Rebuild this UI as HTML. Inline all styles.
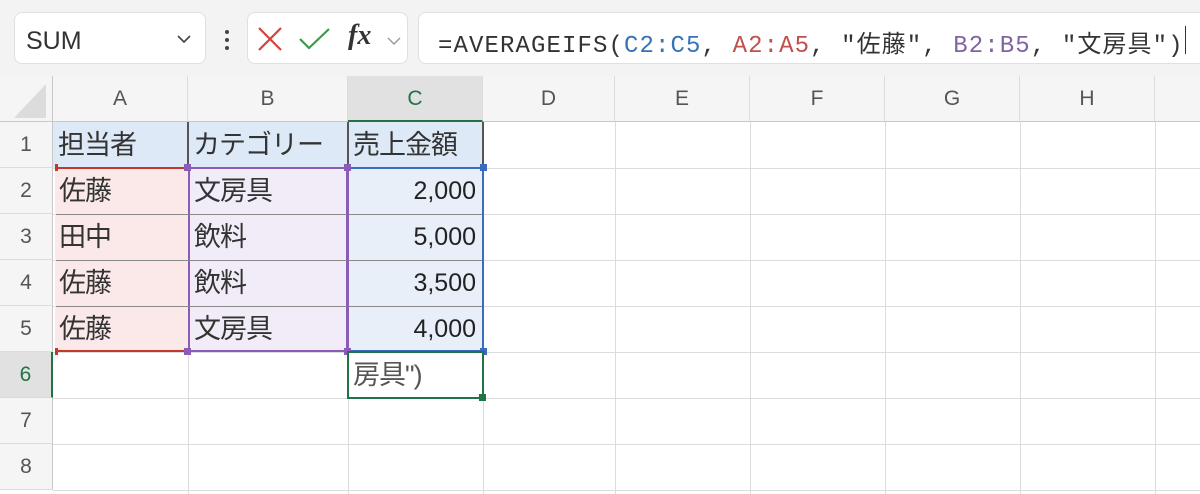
<!DOCTYPE html><html><head><meta charset="utf-8"><style>
*{margin:0;padding:0;box-sizing:border-box}
body{width:1200px;height:494px;overflow:hidden;background:#fff;font-family:"Liberation Sans","Noto Sans CJK JP",sans-serif;position:relative}
.a{position:absolute}
.tb{left:0;top:0;width:1200px;height:76px;background:#f3f3f3}
.box{background:#fff;border:1px solid #e0e0e0;border-radius:8px}
.ch{top:76px;height:46px;font-size:21px;color:#555;text-align:center;line-height:46px;border-right:1px solid #dcdcdc;background:#f5f5f5;border-bottom:1px solid #c8c8c8}
.rh{left:0;width:53px;height:46px;font-size:21px;color:#555;text-align:center;line-height:46px;background:#f5f5f5;border-bottom:1px solid #dcdcdc;border-right:1px solid #c8c8c8}
.vl{top:122px;width:1px;height:372px;background:#dcdcdc}
.hl{left:53px;width:1147px;height:1px;background:#dcdcdc}
.c{font-size:27px;color:#333;line-height:46px;padding-left:5px;white-space:nowrap;letter-spacing:-1px}
.n{font-size:25px;color:#222;line-height:46px;text-align:right;padding-right:7px}
.hd{width:7px;height:7px}
</style></head><body>
<div class="a tb"></div>
<div class="a box" style="left:14px;top:12px;width:192px;height:52px"></div>
<div class="a" style="left:26px;top:27px;font-size:25px;color:#333">SUM</div>
<svg class="a" style="left:176px;top:34px" width="16" height="10"><path d="M2 2 L8 8 L14 2" fill="none" stroke="#444" stroke-width="1.6"/></svg>
<div class="a" style="left:225px;top:30px;width:4px;height:4px;background:#444;border-radius:2px"></div>
<div class="a" style="left:225px;top:38px;width:4px;height:4px;background:#444;border-radius:2px"></div>
<div class="a" style="left:225px;top:46px;width:4px;height:4px;background:#444;border-radius:2px"></div>
<div class="a box" style="left:247px;top:12px;width:161px;height:52px"></div>
<svg class="a" style="left:256px;top:26px" width="28" height="26"><path d="M3 2 L25 24 M25 2 L3 24" stroke="#d9403a" stroke-width="2.2"/></svg>
<svg class="a" style="left:298px;top:26px" width="34" height="26"><path d="M2 13 L11 22 L31 3" fill="none" stroke="#3a9a4a" stroke-width="2.2"/></svg>
<div class="a" style="left:348px;top:20px;font-family:'Liberation Serif',serif;font-style:italic;font-weight:bold;font-size:28px;color:#333">fx</div>
<svg class="a" style="left:386px;top:36px" width="16" height="10"><path d="M2 2 L8 8 L14 2" fill="none" stroke="#999" stroke-width="1.4"/></svg>
<div class="a box" style="left:418px;top:12px;width:800px;height:52px"></div>
<div class="a" style="left:438px;top:24px;font-family:'Liberation Mono','Noto Sans CJK JP',monospace;font-size:24px;color:#333;white-space:nowrap;letter-spacing:1.1px">=AVERAGEIFS(<span style="color:#3572b8">C2:C5</span>, <span style="color:#c0504d">A2:A5</span>, "佐藤", <span style="color:#8064a2">B2:B5</span>, "文房具")</div>
<div class="a" style="left:1185px;top:26px;width:1px;height:28px;background:#333"></div>
<div class="a" style="left:0;top:76px;width:53px;height:46px;background:#f5f5f5;border-right:1px solid #c8c8c8;border-bottom:1px solid #c8c8c8"></div>
<svg class="a" style="left:14px;top:84px" width="32" height="34"><path d="M32 0 L32 34 L0 34 Z" fill="#dcdcdc"/></svg>
<div class="a ch" style="left:53px;width:135px">A</div>
<div class="a ch" style="left:188px;width:160px">B</div>
<div class="a ch" style="left:348px;width:135px;background:#e1e1e1;color:#217346;border-bottom:2px solid #217346">C</div>
<div class="a ch" style="left:483px;width:132px">D</div>
<div class="a ch" style="left:615px;width:135px">E</div>
<div class="a ch" style="left:750px;width:135px">F</div>
<div class="a ch" style="left:885px;width:135px">G</div>
<div class="a ch" style="left:1020px;width:135px">H</div>
<div class="a ch" style="left:1155px;width:45px;border-right:none"></div>
<div class="a rh" style="top:122px">1</div>
<div class="a rh" style="top:168px">2</div>
<div class="a rh" style="top:214px">3</div>
<div class="a rh" style="top:260px">4</div>
<div class="a rh" style="top:306px">5</div>
<div class="a rh" style="top:352px;background:#e1e1e1;color:#217346;border-right:2px solid #217346">6</div>
<div class="a rh" style="top:398px">7</div>
<div class="a rh" style="top:444px">8</div>
<div class="a vl" style="left:188px"></div><div class="a vl" style="left:348px"></div><div class="a vl" style="left:483px"></div><div class="a vl" style="left:615px"></div><div class="a vl" style="left:750px"></div><div class="a vl" style="left:885px"></div><div class="a vl" style="left:1020px"></div><div class="a vl" style="left:1155px"></div>
<div class="a hl" style="top:168px"></div><div class="a hl" style="top:214px"></div><div class="a hl" style="top:260px"></div><div class="a hl" style="top:306px"></div><div class="a hl" style="top:352px"></div><div class="a hl" style="top:398px"></div><div class="a hl" style="top:444px"></div><div class="a hl" style="top:490px"></div>
<div class="a" style="left:53px;top:122px;width:430px;height:46px;background:#dde9f6"></div>
<div class="a" style="left:187px;top:122px;width:2px;height:46px;background:#555"></div>
<div class="a" style="left:347px;top:122px;width:2px;height:46px;background:#555"></div>
<div class="a" style="left:482px;top:122px;width:2px;height:46px;background:#555"></div>
<div class="a c" style="left:53px;top:122px">担当者</div>
<div class="a c" style="left:188px;top:122px">カテゴリー</div>
<div class="a c" style="left:348px;top:122px">売上金額</div>
<div class="a" style="left:55px;top:167px;width:133px;height:185px;background:#fbe9e9;border-top:2px solid #c0392b;border-bottom:2px solid #c0392b"></div>
<div class="a" style="left:188px;top:167px;width:160px;height:185px;background:#f1ecf7;border:2px solid #8a5cb8"></div>
<div class="a" style="left:348px;top:167px;width:136px;height:185px;background:#e9eff8;border:2px solid #3a6dbf;border-left:none"></div>
<div class="a" style="left:56px;top:214px;width:426px;height:1px;background:#888"></div>
<div class="a" style="left:56px;top:260px;width:426px;height:1px;background:#888"></div>
<div class="a" style="left:56px;top:306px;width:426px;height:1px;background:#888"></div>
<div class="a" style="left:347px;top:168px;width:2px;height:184px;background:#8a5cb8"></div>
<div class="a hd" style="left:184px;top:164px;background:#8a5cb8"></div>
<div class="a hd" style="left:344px;top:164px;background:#8a5cb8"></div>
<div class="a hd" style="left:480px;top:164px;background:#3a6dbf"></div>
<div class="a hd" style="left:184px;top:348px;background:#8a5cb8"></div>
<div class="a hd" style="left:344px;top:348px;background:#8a5cb8"></div>
<div class="a hd" style="left:480px;top:348px;background:#3a6dbf"></div>
<div class="a" style="left:55px;top:164px;width:3px;height:7px;background:#c0392b"></div>
<div class="a" style="left:55px;top:348px;width:3px;height:7px;background:#c0392b"></div>
<div class="a c" style="left:54px;top:168px">佐藤</div>
<div class="a c" style="left:54px;top:214px">田中</div>
<div class="a c" style="left:54px;top:260px">佐藤</div>
<div class="a c" style="left:54px;top:306px">佐藤</div>
<div class="a c" style="left:189px;top:168px">文房具</div>
<div class="a c" style="left:189px;top:214px">飲料</div>
<div class="a c" style="left:189px;top:260px">飲料</div>
<div class="a c" style="left:189px;top:306px">文房具</div>
<div class="a n" style="left:348px;top:168px;width:135px">2,000</div>
<div class="a n" style="left:348px;top:214px;width:135px">5,000</div>
<div class="a n" style="left:348px;top:260px;width:135px">3,500</div>
<div class="a n" style="left:348px;top:306px;width:135px">4,000</div>
<div class="a" style="left:347px;top:351px;width:137px;height:48px;border:2px solid #217346;background:#fff"></div>
<div class="a hd" style="left:479px;top:394px;background:#217346"></div>
<div class="a c" style="left:348px;top:352px;color:#555">房具")</div>
</body></html>
